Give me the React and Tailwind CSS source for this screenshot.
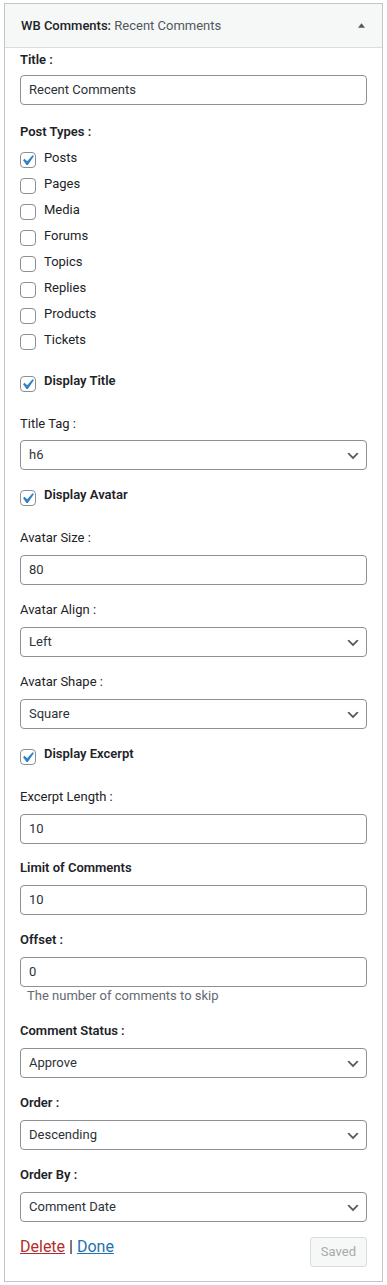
import React from "react";

const postTypes = [
  { name: "Posts", checked: true },
  { name: "Pages" },
  { name: "Media" },
  { name: "Forums" },
  { name: "Topics" },
  { name: "Replies" },
  { name: "Products" },
  { name: "Tickets" },
];

function Checkbox({ checked }) {
  return (
    <span className="relative block w-[16px] h-[16px] shrink-0 rounded-[4px] border border-[#8c8f94] bg-white">
      {checked && (
        <svg viewBox="0 0 20 20" className="absolute left-[-4px] top-[-3px] w-[21px] h-[21px]">
          <path d="M14.83 4.89l1.34.94-5.81 8.38H9.02L5.78 9.67l1.34-1.25 2.57 2.4z" fill="#3582c4" />
        </svg>
      )}
    </span>
  );
}

// bold checkbox row (Display Title, Display Avatar...)
function Toggle({ label, className = "" }) {
  return (
    <div className={"flex items-start gap-[8px] " + className}>
      <span className="mt-[5px]">
        <Checkbox checked />
      </span>
      <span className="leading-[20px] font-semibold text-[#1d2327]">{label}</span>
    </div>
  );
}

function Label({ children, bold, className = "" }) {
  return (
    <div className={"leading-[20px] text-[#1d2327] " + (bold ? "font-semibold " : "") + className}>
      {children}
    </div>
  );
}

function TextInput({ value, className = "" }) {
  return (
    <div className={"h-[30px] flex items-center px-[8px] rounded-[4px] border border-[#8c8f94] bg-white text-[#2c3338] " + className}>
      {value}
    </div>
  );
}

function Select({ value, className = "" }) {
  return (
    <div className={"h-[30px] flex items-center justify-between pl-[8px] pr-[5px] rounded-[4px] border border-[#8c8f94] bg-white text-[#2c3338] " + className}>
      <span>{value}</span>
      <svg viewBox="0 0 20 20" className="w-[16px] h-[16px] mt-[2px]">
        <path d="M5 6l5 5 5-5 2 1-7 7-7-7 2-1z" fill="#555" />
      </svg>
    </div>
  );
}

export default function App() {
  return (
    <div className="min-h-screen bg-white pt-[3px] px-[4px] text-[13px] font-['Roboto','Liberation_Sans',sans-serif]">
      <div className="border border-[#c3c4c7] bg-white">
        {/* widget header */}
        <div className="h-[44px] flex items-center justify-between pl-[16px] pr-[17px] bg-[#f6f7f7] border-b border-[#dcdcde]">
          <div className="leading-[20px] mt-[1px]">
            <span className="font-medium text-[#1d2327]">WB Comments: </span>
            <span className="text-[#50575e]">Recent Comments</span>
          </div>
          <svg viewBox="0 0 8 5" className="w-[7px] h-[5px]">
            <polygon points="0,5 4,0 8,5" fill="#50575e" />
          </svg>
        </div>

        <div className="px-[15px] pt-[2px] pb-[14px]">
          <Label bold>Title :</Label>
          <TextInput value="Recent Comments" className="mt-[5px]" />

          <Label bold className="mt-[17px]">Post Types :</Label>
          <div className="mt-[6px]">
            {postTypes.map((p) => (
              <div key={p.name} className="h-[26px] flex items-start gap-[8px]">
                <span className="mt-[4px]">
                  <Checkbox checked={p.checked} />
                </span>
                <span className="leading-[20px] text-[#1d2327]">{p.name}</span>
              </div>
            ))}
          </div>

          <Toggle label="Display Title" className="mt-[15px]" />
          <Label className="mt-[22px]">Title Tag :</Label>
          <Select value="h6" className="mt-[6px]" />

          <Toggle label="Display Avatar" className="mt-[15px]" />
          <Label className="mt-[22px]">Avatar Size :</Label>
          <TextInput value="80" className="mt-[7px]" />
          <Label className="mt-[15px]">Avatar Align :</Label>
          <Select value="Left" className="mt-[7px]" />
          <Label className="mt-[15px]">Avatar Shape :</Label>
          <Select value="Square" className="mt-[7px]" />

          <Toggle label="Display Excerpt" className="mt-[15px]" />
          <Label className="mt-[22px]">Excerpt Length :</Label>
          <TextInput value="10" className="mt-[7px]" />

          <Label bold className="mt-[14px]">Limit of Comments</Label>
          <TextInput value="10" className="mt-[7px]" />

          <Label bold className="mt-[15px]">Offset :</Label>
          <TextInput value="0" className="mt-[7px]" />
          <div className="leading-[18px] pl-[7px] text-[#646970]">The number of comments to skip</div>

          <Label bold className="mt-[16px]">Comment Status :</Label>
          <Select value="Approve" className="mt-[7px]" />
          <Label bold className="mt-[15px]">Order :</Label>
          <Select value="Descending" className="mt-[7px]" />
          <Label bold className="mt-[15px]">Order By :</Label>
          <Select value="Comment Date" className="mt-[7px]" />

          <div className="mt-[15px] flex items-start justify-between">
            <div className="leading-[20px] text-[16px]">
              <a className="underline text-[#b32d2e]">Delete</a>
              <span className="text-[#1d2327]"> | </span>
              <a className="underline text-[#2271b1]">Done</a>
            </div>
            <div className="h-[30px] px-[10px] flex items-center rounded-[3px] border border-[#dcdcde] bg-[#f6f7f7] text-[#a7aaad]">
              Saved
            </div>
          </div>
        </div>
      </div>
    </div>
  );
}
